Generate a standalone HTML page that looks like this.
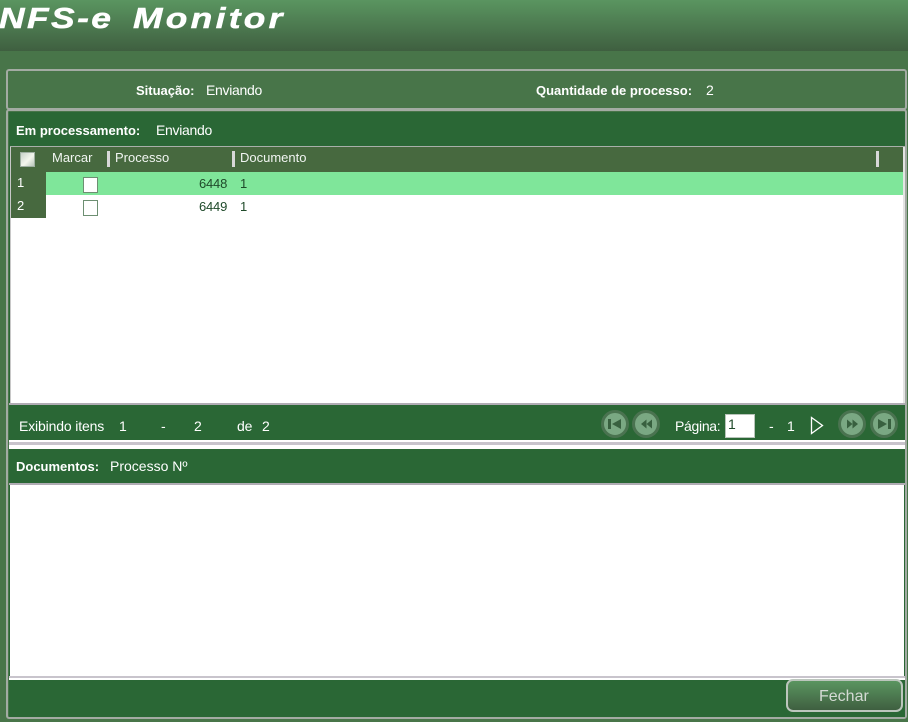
<!DOCTYPE html>
<html><head><meta charset="utf-8">
<style>
html,body{margin:0;padding:0}
body{width:908px;height:722px;overflow:hidden;position:relative;background:#487549;font-family:"Liberation Sans",sans-serif;font-size:14px;color:#fff}
div,span,svg{position:absolute;box-sizing:border-box}
.t{white-space:nowrap;line-height:16px;transform-origin:0 0;letter-spacing:-.2px}
.b{font-weight:bold;font-size:13px;letter-spacing:0}
.d{color:#1f4a2a;font-size:13px;letter-spacing:-.2px}
.cb{width:15px;height:16px;background:#fff;border:1px solid #6d8f72}
.sep{width:3px;height:16px;background:#d8d8d8;top:151px}
.w{background:#fff}
.g{background:#2a6735}
.line{background:#b4b0b8;height:1px}
.btn{width:28px;height:28px;border-radius:50%;top:410px;background:#7aa883;border:3px solid #4a7350}
.h{font-size:13px;color:#f1f5f1;letter-spacing:0}
.logo{font:italic bold 29px/30px 'Liberation Sans',sans-serif;white-space:nowrap;transform:scaleX(1.22);transform-origin:0 0;color:#fff;-webkit-text-stroke:.5px #fff;top:4px}
</style></head><body>
<div style="left:0;top:0;width:908px;height:51px;background:linear-gradient(#5a9560,#3f5f40)"></div>
<span class="logo" style="left:-1px;letter-spacing:2px">NFS-e</span>
<span class="logo" style="left:133px;letter-spacing:2.700px">Monitor</span>

<div style="left:6px;top:69px;width:901px;height:41px;border:2px solid #a3aba3;border-radius:3px;background:#487549"></div>
<span class="t b" style="left:136px;top:83px;">Situação:</span>
<span class="t" style="left:206px;top:82px;letter-spacing:-.3px">Enviando</span>
<span class="t b" style="left:536px;top:83px;">Quantidade de processo:</span>
<span class="t" style="left:706px;top:82px">2</span>

<div style="left:6px;top:109px;width:901px;height:610px;border:2px solid #a3aba3;border-radius:3px"></div>
<div class="g" style="left:9px;top:112px;width:896px;height:605px"></div>

<span class="t b" style="left:16px;top:123px">Em processamento:</span>
<span class="t" style="left:156px;top:122px;letter-spacing:-.3px">Enviando</span>

<div style="left:10px;top:146px;width:895px;height:1px;background:#a9b0aa"></div>
<div style="left:11px;top:147px;width:893px;height:25px;background:#47693f"></div>
<div class="w" style="left:10px;top:172px;width:894px;height:231px"></div>
<div style="left:10px;top:147px;width:1px;height:257px;background:#c8c8c8"></div>
<div style="left:903px;top:147px;width:2px;height:257px;background:#e4e4e4"></div>
<div style="left:46px;top:172px;width:857px;height:23px;background:#7fe69a"></div>
<div style="left:11px;top:172px;width:35px;height:46px;background:#47693f"></div>

<div style="left:20px;top:152px;width:15px;height:15px;background:linear-gradient(135deg,#c7d2c9,#f4f7ee 55%,#b9c6bb);border:1px solid #9fb0a2"></div>
<span class="t h" style="left:52px;top:150px">Marcar</span>
<div class="sep" style="left:107px"></div>
<span class="t h" style="left:115px;top:150px">Processo</span>
<div class="sep" style="left:232px"></div>
<span class="t h" style="left:240px;top:150px">Documento</span>
<div class="sep" style="left:876px"></div>

<span class="t" style="left:17px;top:175px;font-size:13px">1</span>
<span class="t" style="left:17px;top:198px;font-size:13px">2</span>
<div class="cb" style="left:83px;top:177px"></div>
<div class="cb" style="left:83px;top:200px"></div>
<span class="t d" style="left:199px;top:176px">6448</span>
<span class="t d" style="left:240px;top:176px">1</span>
<span class="t d" style="left:199px;top:199px">6449</span>
<span class="t d" style="left:240px;top:199px">1</span>

<div class="line" style="left:9px;top:403px;width:896px;height:2px;background:#b0acb4"></div>
<span class="t" style="left:19px;top:418px;letter-spacing:-.15px">Exibindo itens</span>
<span class="t" style="left:119px;top:418px">1</span>
<span class="t" style="left:161px;top:418px">-</span>
<span class="t" style="left:194px;top:418px">2</span>
<span class="t" style="left:237px;top:418px">de</span>
<span class="t" style="left:262px;top:418px">2</span>

<div class="btn" style="left:601px"></div>
<div class="btn" style="left:632px"></div>
<div class="btn" style="left:838px"></div>
<div class="btn" style="left:870px"></div>
<svg style="left:601px;top:410px" width="28" height="28" viewBox="0 0 28 28"><path d="M7 9h3v10H7zM20 9v10l-9-5z" fill="#38603f"/></svg>
<svg style="left:632px;top:410px" width="28" height="28" viewBox="0 0 28 28"><path d="M14.500 9.500v9l-5.500-4.500zM20 9.500v9l-5.500-4.500z" fill="#38603f"/></svg>
<svg style="left:838px;top:410px" width="28" height="28" viewBox="0 0 28 28"><path d="M9 9.500v9l5.500-4.500zM14.500 9.500v9l5.500-4.500z" fill="#38603f"/></svg>
<svg style="left:870px;top:410px" width="28" height="28" viewBox="0 0 28 28"><path d="M8 9v10l9-5zM18 9h3v10h-3z" fill="#38603f"/></svg>

<span class="t" style="left:675px;top:418px;letter-spacing:-.3px">Página:</span>
<div class="w" style="left:725px;top:414px;width:30px;height:24px;border:1px solid #b8c4ba"></div>
<span class="t" style="left:728px;top:416px;color:#1f4a2a">1</span>
<span class="t" style="left:769px;top:418px">-</span>
<span class="t" style="left:787px;top:418px">1</span>
<svg style="left:809px;top:416px" width="16" height="20" viewBox="0 0 16 20"><path d="M2.500 1.500v16L13.500 9.500z" fill="none" stroke="#fff" stroke-width="1.300"/></svg>

<div style="left:9px;top:440px;width:896px;height:9px;background:#fff"></div>
<div style="left:9px;top:442px;width:896px;height:3px;background:#c8c4cc"></div>

<span class="t b" style="left:16px;top:459px">Documentos:</span>
<span class="t" style="left:110px;top:458px;letter-spacing:0">Processo Nº</span>

<div class="line" style="left:9px;top:483px;width:896px;height:2px;background:#b0acb4"></div>
<div class="w" style="left:10px;top:485px;width:894px;height:191px"></div>
<div style="left:9px;top:676px;width:896px;height:4px;background:linear-gradient(#c8c4cc 50%,#fff 50%)"></div>

<div style="left:786px;top:679px;width:117px;height:33px;border:2px solid #bcc6bd;border-radius:7px;background:linear-gradient(#5a9560,#3f5f40)"></div>
<span class="t" style="left:819px;top:689px;font-size:16px;letter-spacing:0;color:#d4dad4">Fechar</span>
</body></html>
